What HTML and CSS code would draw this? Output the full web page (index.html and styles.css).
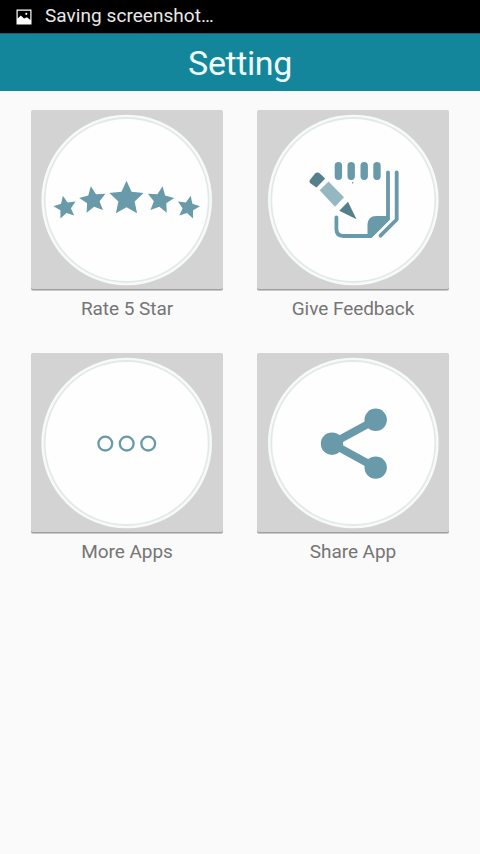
FILE: index.html
```html
<!DOCTYPE html>
<html lang="en">
<head>
    <meta charset="UTF-8">
    <meta name="viewport" content="width=device-width, initial-scale=1.0">
    <title>Setting</title>
    <link rel="stylesheet" href="styles.css">
</head>
<body>
    <div class="status-bar">
        <svg class="status-icon" viewBox="0 0 16 16">
            <path fill="#fff" fill-rule="evenodd" d="M0.5 0.5H15.5V15.5H0.5ZM1.7 1.7V9.5L4.8 6.5L8 9.5L11 8.3L14.3 11V1.7Z"/>
            <circle cx="10.3" cy="4.8" r="1.1" fill="#fff"/>
        </svg>
        <span>Saving screenshot…</span>
    </div>
    <header>
        <h1>Setting</h1>
    </header>
    <main class="grid">
        <div class="item">
            <button class="tile">
                <svg viewBox="0 0 192 180">
                    <defs>
                        <polygon id="star" points="0,-10 2.8,-3.8 9.5,-3.1 4.5,1.5 5.9,8.1 0,4.8 -5.9,8.1 -4.5,1.5 -9.5,-3.1 -2.8,-3.8"/>
                    </defs>
                    <circle class="disc" cx="95.7" cy="90" r="85.3"/>
                    <circle class="ring" cx="95.7" cy="90" r="82"/>
                    <g class="fill">
                        <use href="#star" transform="translate(34.3 97.5) rotate(-12) scale(1.19)"/>
                        <use href="#star" transform="translate(62 90.2) rotate(-9) scale(1.4)"/>
                        <use href="#star" transform="translate(95.5 88.7) scale(1.8)"/>
                        <use href="#star" transform="translate(129.4 90.2) rotate(9) scale(1.4)"/>
                        <use href="#star" transform="translate(157.2 97.5) rotate(12) scale(1.19)"/>
                    </g>
                </svg>
            </button>
            <p class="label">Rate 5 Star</p>
        </div>
        <div class="item">
            <button class="tile">
                <svg viewBox="0 0 192 180">
                    <circle class="disc" cx="96.3" cy="90" r="85.3"/>
                    <circle class="ring" cx="96.3" cy="90" r="82"/>
                    <!-- notepad -->
                    <path class="line" stroke-width="7.4" d="M81.4 55.7V66.3M94.2 55.7V66.3M107.2 55.7V66.3M120 55.7V66.3"/>
                    <path class="line" stroke-width="3.8" d="M131 62.3V109L114 126H86.5Q79.4 126 79.4 119V107.5"/>
                    <path class="line" stroke-width="3.8" d="M139.7 62.3V109.5L123.5 125.7"/>
                    <path class="fill" d="M110.5 127.5V114.5Q111 106 119 106H132.6V109.5L114 127.8Z"/>
                    <circle class="dark" cx="95.7" cy="72.8" r="0.7"/>
                    <!-- pencil -->
                    <path class="dark" d="M52.8 70Q52 71.5 53 73L59.5 77.5L68.2 68.5L62 62.8Q60.2 62 58.5 63Z"/>
                    <path class="light" d="M62.7 80.3L71.5 71.5L87 87.3L78 96.8Z"/>
                    <path class="dark" d="M82.3 100.8L91 91.7L99.5 109.2Z"/>
                </svg>
            </button>
            <p class="label">Give Feedback</p>
        </div>
        <div class="item">
            <button class="tile">
                <svg viewBox="0 0 192 180">
                    <circle class="disc" cx="95.7" cy="90" r="85.3"/>
                    <circle class="ring" cx="95.7" cy="90" r="82"/>
                    <g class="line" stroke-width="2.3">
                        <circle cx="74.3" cy="90.6" r="6.9"/>
                        <circle cx="95.7" cy="90.6" r="6.9"/>
                        <circle cx="117.2" cy="90.6" r="6.9"/>
                    </g>
                </svg>
            </button>
            <p class="label">More Apps</p>
        </div>
        <div class="item">
            <button class="tile">
                <svg viewBox="0 0 192 180">
                    <circle class="disc" cx="96.3" cy="90" r="85.3"/>
                    <circle class="ring" cx="96.3" cy="90" r="82"/>
                    <path class="line" stroke-width="7.6" d="M118.7 66.8L75 90.7L118.7 114.6"/>
                    <g class="fill">
                        <circle cx="75" cy="90.7" r="11.2"/>
                        <circle cx="118.7" cy="66.8" r="11.2"/>
                        <circle cx="118.7" cy="114.6" r="11.2"/>
                    </g>
                </svg>
            </button>
            <p class="label">Share App</p>
        </div>
    </main>
</body>
</html>
```

FILE: styles.css
```css
body {
    font-family: Roboto, "Liberation Sans", sans-serif;
    margin: 0;
    min-height: 854px;
    background-color: #fafafa;
    color: #757575;
}
.status-bar {
    display: flex;
    align-items: center;
    gap: 13px;
    height: 33px;
    padding-left: 16px;
    box-sizing: border-box;
    background-color: #000;
    color: #e8e8e8;
    font-size: 19px;
    line-height: 32px;
}
.status-bar span {
    padding-bottom: 1px;
    letter-spacing: 0.05px;
}
.status-icon {
    width: 16px;
    height: 16px;
}
header {
    height: 58px;
    background-color: #13869b;
    box-shadow: inset 0 1px 0 #1d5f6c;
    color: #effcff;
    text-align: center;
}
h1 {
    margin: 0;
    font-size: 34px;
    font-weight: 400;
    line-height: 60px;
    letter-spacing: -0.4px;
}
.grid {
    display: grid;
    grid-template-columns: 192px 192px;
    grid-auto-rows: 243px;
    column-gap: 34px;
    justify-content: center;
    padding-top: 19px;
}
.tile {
    display: block;
    width: 192px;
    height: 180px;
    padding: 0;
    border: none;
    border-radius: 2px;
    background-color: #d3d3d3;
    box-shadow: 0 1px 0 #c8c8c8, inset 0 -1px 0 #a0a0a0;
    cursor: pointer;
}
.tile svg {
    display: block;
    width: 192px;
    height: 180px;
}
.label {
    margin: 8px 0 0;
    font-size: 19px;
    line-height: 22px;
    text-align: center;
    letter-spacing: -0.05px;
}
.disc {
    fill: #f8fafa;
}
.ring {
    fill: #fefefe;
    stroke: #e2e9e9;
    stroke-width: 1.8;
}
.fill {
    fill: #689aa9;
}
.dark {
    fill: #567f8c;
}
.light {
    fill: #93b8c2;
}
.line {
    fill: none;
    stroke: #689aa9;
    stroke-linecap: round;
    stroke-linejoin: round;
}
```
